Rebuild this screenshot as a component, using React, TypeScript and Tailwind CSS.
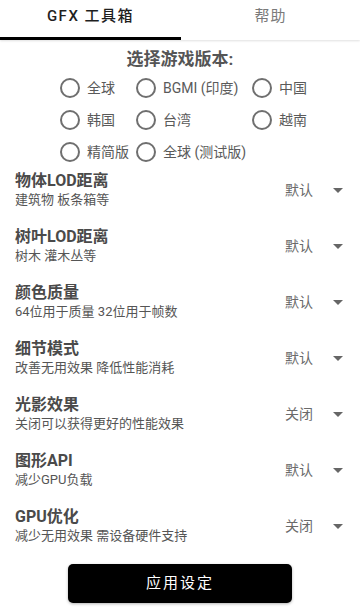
import React from "react";

const versions: { label: string; col: number }[][] = [
  [
    { label: "全球", col: 1 },
    { label: "BGMI (印度)", col: 2 },
    { label: "中国", col: 3 },
  ],
  [
    { label: "韩国", col: 1 },
    { label: "台湾", col: 2 },
    { label: "越南", col: 3 },
  ],
  [
    { label: "精简版", col: 1 },
    { label: "全球 (测试版)", col: 2 },
  ],
];

const settings = [
  { title: "物体LOD距离", sub: "建筑物 板条箱等", value: "默认" },
  { title: "树叶LOD距离", sub: "树木 灌木丛等", value: "默认" },
  { title: "颜色质量", sub: "64位用于质量 32位用于帧数", value: "默认" },
  { title: "细节模式", sub: "改善无用效果 降低性能消耗", value: "默认" },
  { title: "光影效果", sub: "关闭可以获得更好的性能效果", value: "关闭" },
  { title: "图形API", sub: "减少GPU负载", value: "默认" },
  { title: "GPU优化", sub: "减少无用效果 需设备硬件支持", value: "关闭" },
];

function Radio({ label }: { label: string }) {
  return (
    <div className="flex items-center h-[20px]">
      <span className="w-[20px] h-[20px] rounded-full border-2 border-[#6f6f6f] shrink-0" />
      <span className="ml-[7px] text-[14px] leading-[20px] text-[#5a5a5a] whitespace-nowrap">{label}</span>
    </div>
  );
}

export default function App() {
  return (
    <div
      className="w-[360px] h-[614px] bg-white overflow-hidden"
      style={{ fontFamily: "Roboto, 'Noto Sans CJK SC', 'Noto Sans', sans-serif" }}
    >
      {/* Tabs */}
      <div className="relative h-[40px] flex shadow-[0_1px_2px_rgba(0,0,0,0.12)] bg-white">
        <div className="w-[181px] flex items-center justify-center pb-[8px] text-[15px] font-medium tracking-[1.5px] text-[#1f1f1f]">
          GFX 工具箱
        </div>
        <div className="flex-1 flex items-center justify-center pb-[8px] text-[15px] tracking-[1px] text-[#7a7a7a]">
          帮助
        </div>
        <div className="absolute left-0 bottom-0 w-[181px] h-[3px] bg-black" />
      </div>

      {/* Title */}
      <div className="mt-[8px] h-[24px] flex items-center justify-center text-[17px] font-bold text-[#555555]">
        选择游戏版本:
      </div>

      {/* Radios */}
      <div className="pt-[6px] pl-[60px] flex flex-col gap-y-[12px]">
        {versions.map((row, i) => (
          <div key={i} className="grid grid-cols-[76px_116px_auto]">
            {row.map((v) => (
              <Radio key={v.label} label={v.label} />
            ))}
          </div>
        ))}
      </div>

      {/* Settings */}
      <div className="mt-[0px] flex flex-col">
        {settings.map((s) => (
          <div key={s.title} className="h-[56px] flex items-center pl-[15px] pr-[17px]">
            <div className="flex flex-col">
              <span className="text-[16px] leading-[20px] font-bold text-[#4a4a4a]">{s.title}</span>
              <span className="text-[13px] leading-[18px] text-[#555555]">{s.sub}</span>
            </div>
            <div className="ml-auto flex items-center">
              <span className="text-[14px] text-[#6a6a6a]">{s.value}</span>
              <svg width="10" height="5" viewBox="0 0 10 5" className="ml-[20px]">
                <path d="M0 0 L10 0 L5 5 Z" fill="#666666" />
              </svg>
            </div>
          </div>
        ))}
      </div>

      {/* Button */}
      <div className="mt-[10px] flex justify-center">
        <button className="w-[224px] h-[39px] bg-black rounded-[5px] text-white text-[15px] tracking-[2px] shadow-[0_1px_3px_rgba(0,0,0,0.3)]">
          应用设定
        </button>
      </div>
    </div>
  );
}
